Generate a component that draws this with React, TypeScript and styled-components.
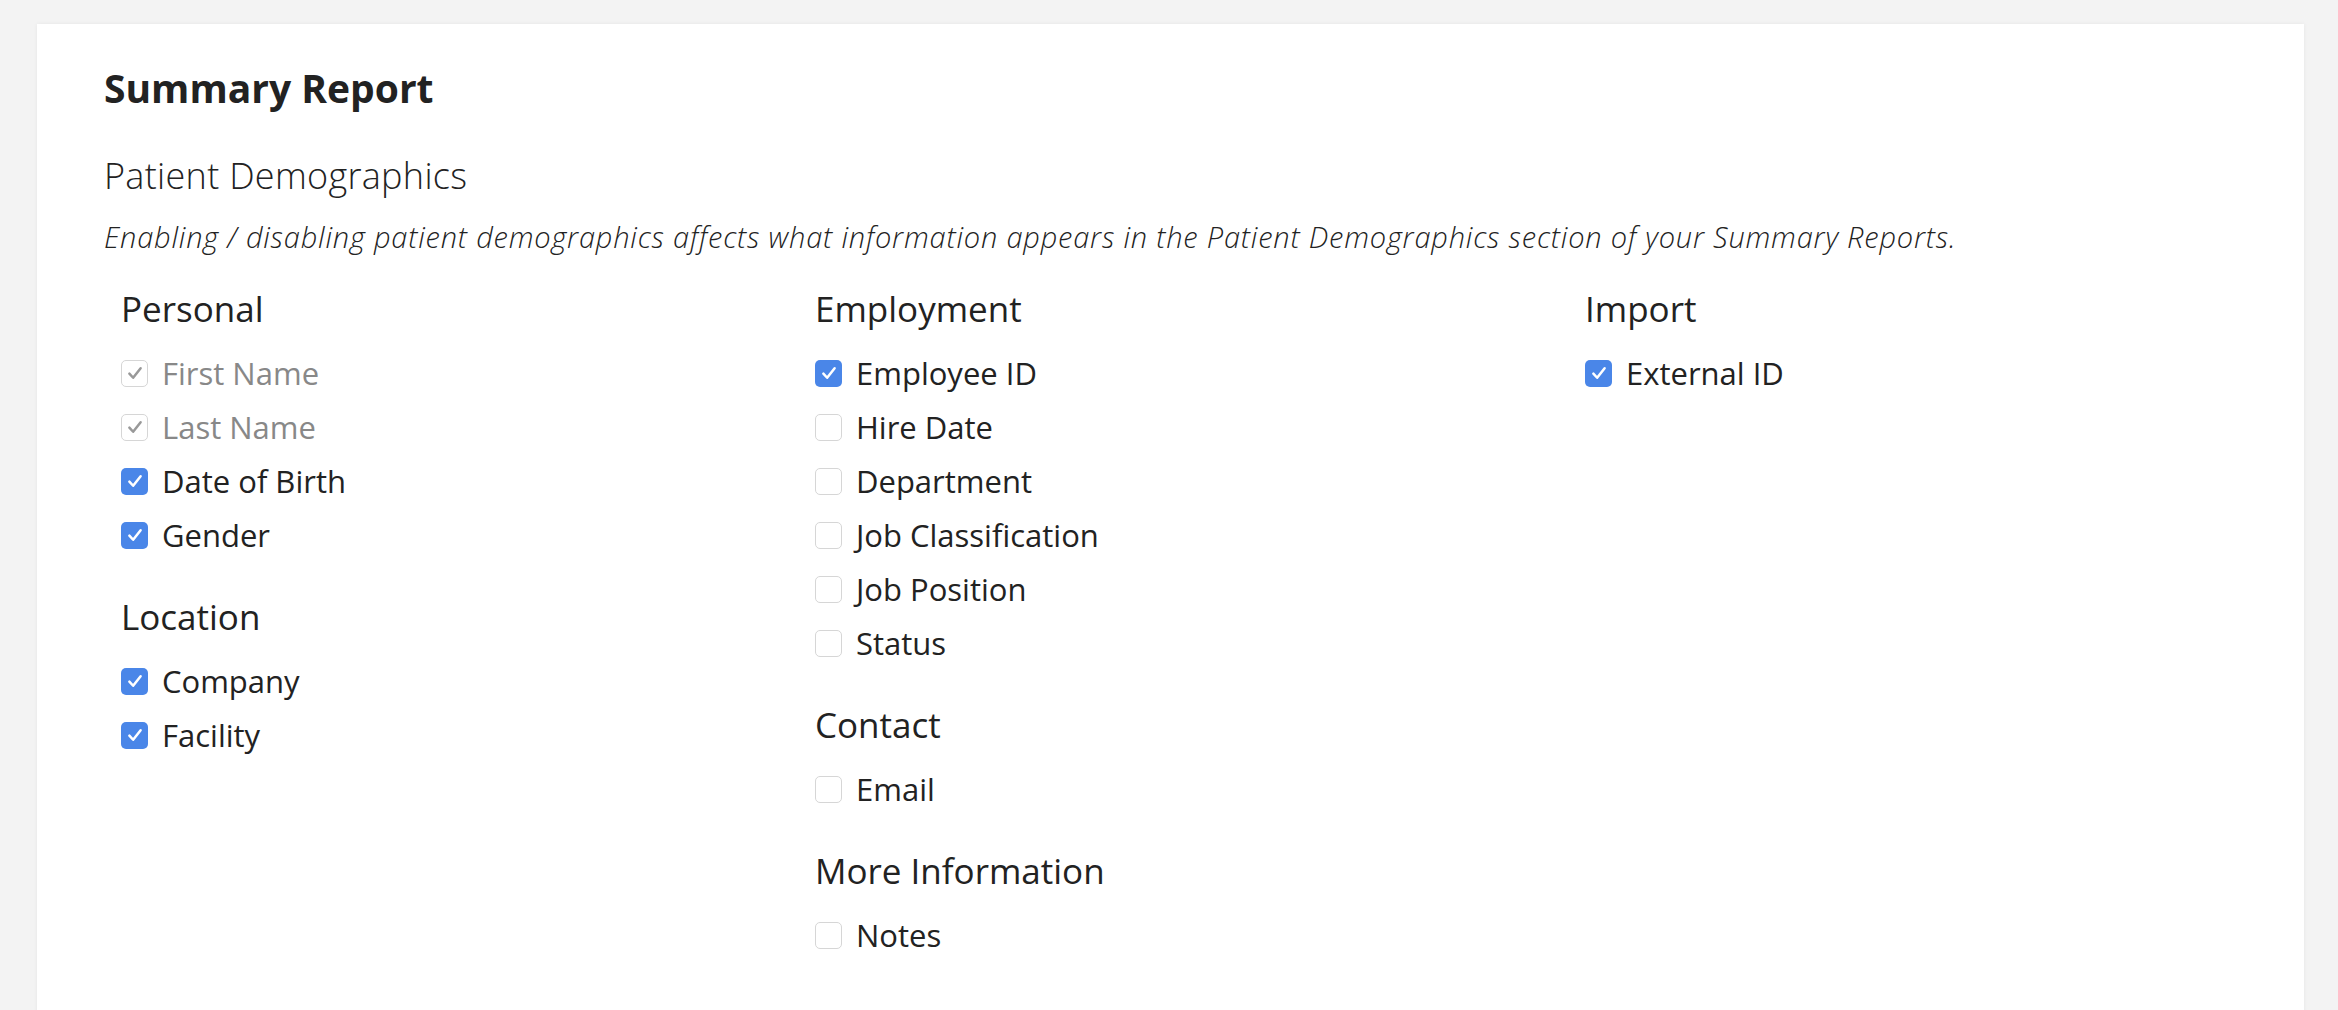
import React from "react";
import styled, { createGlobalStyle } from "styled-components";

const Global = createGlobalStyle`
  html, body { margin: 0; padding: 0; background: #f3f3f3; }
  body { font-family: "Open Sans", sans-serif; color: #222; }
`;

const Page = styled.div`
  padding: 24px 34px 0 37px;
  height: 1010px;
  box-sizing: border-box;
  overflow: hidden;
`;
const Card = styled.div`
  background: #fff;
  min-height: 1100px;
  padding: 40px 67px;
  box-shadow: 0 0 4px rgba(0,0,0,0.06);
`;
const Title = styled.h1`
  margin: 0;
  font-size: 39px;
  line-height: 48px;
  font-weight: 700;
  color: #222;
`;
const Subtitle = styled.h2`
  margin: 40px 0 0;
  font-family: "Open Sans", sans-serif;
  font-weight: 300;
  font-size: 36px;
  line-height: 48px;
  letter-spacing: 0.3px;
  color: #222;
`;
const Desc = styled.p`
  margin: 17px 0 0;
  font-style: italic;
  font-weight: 300;
  font-size: 29px;
  line-height: 40px;
  letter-spacing: 0.8px;
  color: #222;
`;
const Columns = styled.div`
  display: flex;
  margin-top: 28px;
  padding-left: 17px;
`;
const Column = styled.div<{ $w?: number }>`
  ${(p) => (p.$w ? `width: ${p.$w}px;` : "flex: 1;")}
`;
const Group = styled.div`
  & + & { margin-top: 31px; }
`;
const GroupTitle = styled.h3`
  margin: 0 0 13px;
  font-size: 35px;
  line-height: 48px;
  font-weight: 400;
  color: #222;
`;
const Row = styled.label<{ $disabled?: boolean }>`
  display: flex;
  align-items: center;
  height: 54px;
  font-size: 31px;
  color: ${(p) => (p.$disabled ? "#888" : "#222")};
`;
const Box = styled.span<{ $checked?: boolean; $disabled?: boolean }>`
  width: 27px;
  height: 27px;
  box-sizing: border-box;
  border-radius: 5px;
  margin-right: 14px;
  display: flex;
  align-items: center;
  justify-content: center;
  background: ${(p) => (p.$checked && !p.$disabled ? "#4a86e8" : "#fff")};
  border: ${(p) => (p.$checked && !p.$disabled ? "none" : "1.5px solid #d6d6d6")};
`;

type Item = { label: string; checked?: boolean; disabled?: boolean };

const Check = ({ label, checked, disabled }: Item) => (
  <Row $disabled={disabled}>
    <Box $checked={checked} $disabled={disabled}>
      {checked && (
        <svg width="20" height="20" viewBox="0 0 16 16">
          <path d="M3.5 8.5 L6.5 11.8 L12.5 4.2" fill="none" stroke={disabled ? "#999" : "#fff"} strokeWidth="2" strokeLinecap="round" strokeLinejoin="round" />
        </svg>
      )}
    </Box>
    {label}
  </Row>
);

const Section = ({ title, items }: { title: string; items: Item[] }) => (
  <Group>
    <GroupTitle>{title}</GroupTitle>
    {items.map((i) => <Check key={i.label} {...i} />)}
  </Group>
);

export default function App() {
  return (
    <>
      <Global />
      <Page>
        <Card>
          <Title>Summary Report</Title>
          <Subtitle>Patient Demographics</Subtitle>
          <Desc>Enabling / disabling patient demographics affects what information appears in the Patient Demographics section of your Summary Reports.</Desc>
          <Columns>
            <Column $w={694}>
              <Section title="Personal" items={[
                { label: "First Name", checked: true, disabled: true },
                { label: "Last Name", checked: true, disabled: true },
                { label: "Date of Birth", checked: true },
                { label: "Gender", checked: true },
              ]} />
              <Section title="Location" items={[
                { label: "Company", checked: true },
                { label: "Facility", checked: true },
              ]} />
            </Column>
            <Column $w={770}>
              <Section title="Employment" items={[
                { label: "Employee ID", checked: true },
                { label: "Hire Date" },
                { label: "Department" },
                { label: "Job Classification" },
                { label: "Job Position" },
                { label: "Status" },
              ]} />
              <Section title="Contact" items={[{ label: "Email" }]} />
              <Section title="More Information" items={[{ label: "Notes" }]} />
            </Column>
            <Column>
              <Section title="Import" items={[{ label: "External ID", checked: true }]} />
            </Column>
          </Columns>
        </Card>
      </Page>
    </>
  );
}
